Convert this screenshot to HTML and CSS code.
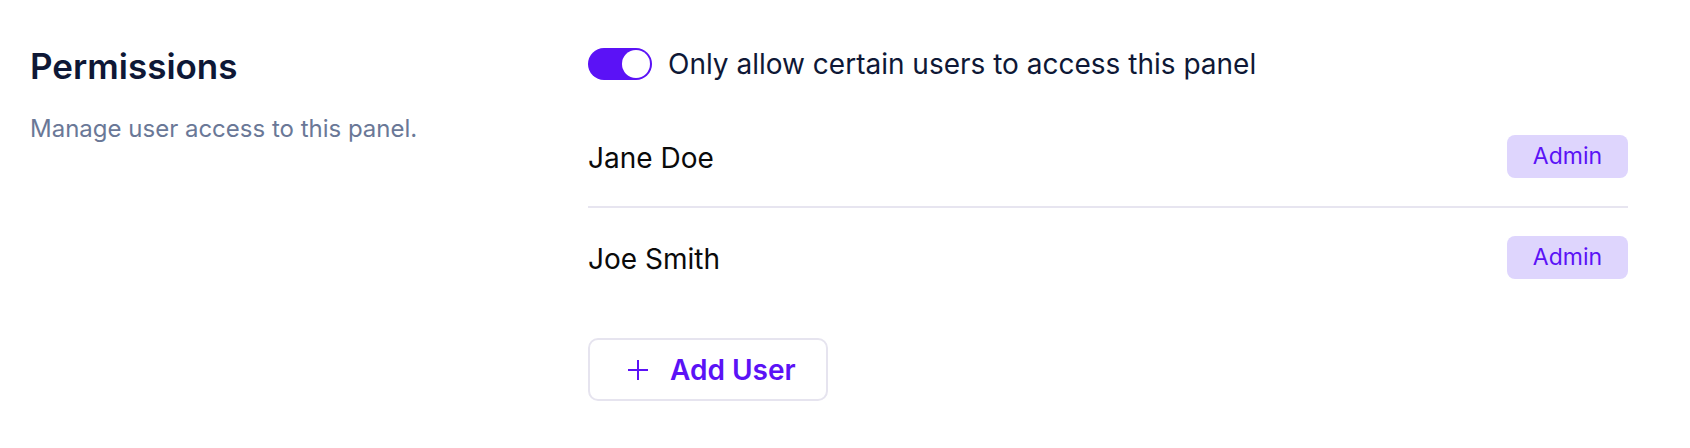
FILE: index.html
```html
<!DOCTYPE html>
<html lang="en">
<head>
<meta charset="utf-8">
<title>Permissions</title>
<link rel="stylesheet" href="styles.css">
</head>
<body>
<div class="page">
  <section class="intro">
    <h2 class="title">Permissions</h2>
    <p class="subtitle">Manage user access to this panel.</p>
  </section>
  <section class="settings">
    <label class="toggle-row">
      <span class="toggle"><span class="knob"></span></span>
      <span class="toggle-label">Only allow certain users to access this panel</span>
    </label>
    <ul class="users">
      <li class="user"><span class="name">Jane Doe</span><span class="badge">Admin</span></li>
      <li class="user"><span class="name">Joe Smith</span><span class="badge">Admin</span></li>
    </ul>
    <button class="add-btn" type="button">
      <svg class="plus" viewBox="0 0 20 20" width="20" height="20" aria-hidden="true"><path d="M10 0v20M0 10h20" stroke="currentColor" stroke-width="2" fill="none"/></svg>
      <span>Add User</span>
    </button>
  </section>
</div>
</body>
</html>
```
FILE: styles.css
```css
* { box-sizing: border-box; }
html, body { margin: 0; padding: 0; background: #ffffff; }
body { font-family: Inter, "Noto Sans", sans-serif; }

.page {
  display: grid;
  grid-template-columns: 558px 1fr;
  padding: 48px 62px 0 30px;
}

.title {
  margin: 0;
  font-size: 35px;
  line-height: 36px;
  font-weight: 600;
  color: #0e1836;
}

.subtitle {
  margin: 31px 0 0;
  font-size: 24px;
  line-height: 28px;
  color: #6a7897;
}

.settings { display: flex; flex-direction: column; align-items: flex-start; }

.toggle-row {
  display: flex;
  align-items: center;
  gap: 16px;
  height: 32px;
}

.toggle {
  width: 64px;
  height: 32px;
  border-radius: 16px;
  background: #5b12f6;
  padding: 2px;
  display: flex;
  justify-content: flex-end;
}

.knob {
  width: 28px;
  height: 28px;
  border-radius: 50%;
  background: #ffffff;
}

.toggle-label {
  font-size: 28px;
  line-height: 32px;
  color: #0e1836;
}

.users {
  list-style: none;
  margin: 27px 0 0;
  padding: 0;
  width: 100%;
}

.user {
  display: flex;
  align-items: center;
  justify-content: space-between;
  padding: 28px 0;
}

.user + .user { border-top: 2px solid #e7e5f0; }

.name {
  font-size: 28px;
  line-height: 32px;
  padding-top: 3px;
  color: #0a0a0a;
}

.badge {
  width: 121px;
  height: 43px;
  border-radius: 8px;
  background: #ded5fd;
  color: #5b12f6;
  font-size: 23px;
  line-height: 43px;
  text-align: center;
}

.add-btn {
  margin-top: 31px;
  height: 63px;
  display: flex;
  align-items: center;
  gap: 22px;
  padding: 0 30px 0 38px;
  background: #ffffff;
  border: 2px solid #e6e4ef;
  border-radius: 10px;
  color: #5b12f6;
  font-family: inherit;
  font-size: 28px;
  font-weight: 600;
}

.plus { display: block; }
```
